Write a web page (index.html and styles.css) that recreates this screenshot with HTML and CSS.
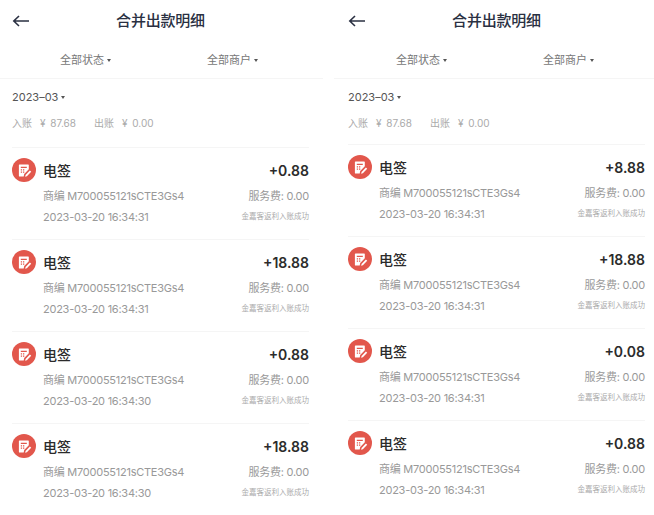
FILE: index.html
```html
<!DOCTYPE html>
<html>
<head>
    <title>合并出款明细</title>
    <link rel="stylesheet" href="styles.css">
</head>
<body>
    <svg class="defs" width="0" height="0">
        <symbol id="sign" viewBox="0 0 24 24">
            <circle cx="12" cy="12" r="12" fill="#e2574c"/>
            <path d="M7.500 6.500h8.700a.6.6 0 0 1 .6.6v4.200l-4.600 4.800-.5 2.400H7.500a.6.6 0 0 1-.6-.6V7.100a.6.6 0 0 1 .6-.6z" fill="#fff"/>
            <path d="M8.800 8.700h6v1.200h-6zM8.800 11.300h1.300v1.200H8.800zM11 11.300h1.300v1.200H11zM8.800 13.500h1.300v1.200H8.800zM11 13.500h1.300v1.200H11z" fill="#e2574c"/>
            <path d="M13.600 17l4.300-4.500 1.300 1.300-4.300 4.500-1.800.5z" fill="#fff"/>
        </symbol>
    </svg>

    <div class="screens">
        <section class="screen screen-left">
            <div class="topbar">
                <svg class="back" width="18" height="12" viewBox="0 0 18 12"><path d="M17 6H2M7 1L1.800 6 7 11" fill="none" stroke="#2a3042" stroke-width="1.600"/></svg>
                <h1>合并出款明细</h1>
            </div>
            <div class="filters">
                <div class="filter">全部状态<span class="caret"></span></div>
                <div class="filter">全部商户<span class="caret"></span></div>
            </div>
            <div class="summary">
                <div class="month">2023–03<span class="caret"></span></div>
                <div class="totals">
                    <div><span class="label">入账</span>¥ 87.68</div>
                    <div><span class="label">出账</span>¥ 0.00</div>
                </div>
            </div>
            <div class="list">
                <div class="item">
                    <svg class="icon"><use href="#sign"/></svg>
                    <div class="info">
                        <div class="name">电签</div>
                        <div class="line">商编 M700055121sCTE3Gs4</div>
                        <div class="line">2023-03-20 16:34:31</div>
                    </div>
                    <div class="nums">
                        <div class="amount">+0.88</div>
                        <div class="line">服务费: 0.00</div>
                        <div class="note">金嘉客返利入账成功</div>
                    </div>
                </div>
                <div class="item">
                    <svg class="icon"><use href="#sign"/></svg>
                    <div class="info">
                        <div class="name">电签</div>
                        <div class="line">商编 M700055121sCTE3Gs4</div>
                        <div class="line">2023-03-20 16:34:31</div>
                    </div>
                    <div class="nums">
                        <div class="amount">+18.88</div>
                        <div class="line">服务费: 0.00</div>
                        <div class="note">金嘉客返利入账成功</div>
                    </div>
                </div>
                <div class="item">
                    <svg class="icon"><use href="#sign"/></svg>
                    <div class="info">
                        <div class="name">电签</div>
                        <div class="line">商编 M700055121sCTE3Gs4</div>
                        <div class="line">2023-03-20 16:34:30</div>
                    </div>
                    <div class="nums">
                        <div class="amount">+0.88</div>
                        <div class="line">服务费: 0.00</div>
                        <div class="note">金嘉客返利入账成功</div>
                    </div>
                </div>
                <div class="item">
                    <svg class="icon"><use href="#sign"/></svg>
                    <div class="info">
                        <div class="name">电签</div>
                        <div class="line">商编 M700055121sCTE3Gs4</div>
                        <div class="line">2023-03-20 16:34:30</div>
                    </div>
                    <div class="nums">
                        <div class="amount">+18.88</div>
                        <div class="line">服务费: 0.00</div>
                        <div class="note">金嘉客返利入账成功</div>
                    </div>
                </div>
            </div>
        </section>

        <section class="screen screen-right">
            <div class="topbar">
                <svg class="back" width="18" height="12" viewBox="0 0 18 12"><path d="M17 6H2M7 1L1.800 6 7 11" fill="none" stroke="#2a3042" stroke-width="1.600"/></svg>
                <h1>合并出款明细</h1>
            </div>
            <div class="filters">
                <div class="filter">全部状态<span class="caret"></span></div>
                <div class="filter">全部商户<span class="caret"></span></div>
            </div>
            <div class="summary">
                <div class="month">2023–03<span class="caret"></span></div>
                <div class="totals">
                    <div><span class="label">入账</span>¥ 87.68</div>
                    <div><span class="label">出账</span>¥ 0.00</div>
                </div>
            </div>
            <div class="list">
                <div class="item">
                    <svg class="icon"><use href="#sign"/></svg>
                    <div class="info">
                        <div class="name">电签</div>
                        <div class="line">商编 M700055121sCTE3Gs4</div>
                        <div class="line">2023-03-20 16:34:31</div>
                    </div>
                    <div class="nums">
                        <div class="amount">+8.88</div>
                        <div class="line">服务费: 0.00</div>
                        <div class="note">金嘉客返利入账成功</div>
                    </div>
                </div>
                <div class="item">
                    <svg class="icon"><use href="#sign"/></svg>
                    <div class="info">
                        <div class="name">电签</div>
                        <div class="line">商编 M700055121sCTE3Gs4</div>
                        <div class="line">2023-03-20 16:34:31</div>
                    </div>
                    <div class="nums">
                        <div class="amount">+18.88</div>
                        <div class="line">服务费: 0.00</div>
                        <div class="note">金嘉客返利入账成功</div>
                    </div>
                </div>
                <div class="item">
                    <svg class="icon"><use href="#sign"/></svg>
                    <div class="info">
                        <div class="name">电签</div>
                        <div class="line">商编 M700055121sCTE3Gs4</div>
                        <div class="line">2023-03-20 16:34:31</div>
                    </div>
                    <div class="nums">
                        <div class="amount">+0.08</div>
                        <div class="line">服务费: 0.00</div>
                        <div class="note">金嘉客返利入账成功</div>
                    </div>
                </div>
                <div class="item">
                    <svg class="icon"><use href="#sign"/></svg>
                    <div class="info">
                        <div class="name">电签</div>
                        <div class="line">商编 M700055121sCTE3Gs4</div>
                        <div class="line">2023-03-20 16:34:31</div>
                    </div>
                    <div class="nums">
                        <div class="amount">+0.88</div>
                        <div class="line">服务费: 0.00</div>
                        <div class="note">金嘉客返利入账成功</div>
                    </div>
                </div>
            </div>
        </section>
    </div>
</body>
</html>
```

FILE: styles.css
```css
html, body {
    height: 515px;
    overflow: hidden;
}
body {
    font-family: Inter, "Noto Sans CJK SC", sans-serif;
    background-color: #fff;
    margin: 0;
    color: #999;
}
.defs {
    display: block;
}
.screens {
    display: flex;
    gap: 11px;
}
.screen {
    width: 323px;
}
.screen-right {
    width: 320px;
}
.screen-left .topbar, .screen-left .summary, .screen-left .list {
    padding: 0 14px 0 12px;
}
.screen-right .topbar, .screen-right .summary, .screen-right .list {
    padding: 0 9px 0 14px;
}
.screen-left .filters {
    padding: 0 17px 0 12px;
}
.screen-right .filters {
    padding: 0 12px 0 14px;
}
.topbar {
    display: flex;
    align-items: center;
    height: 42px;
}
.back {
    flex: none;
    margin-right: -18px;
}
h1 {
    flex: 1;
    margin: 0;
    font-size: 15px;
    font-weight: 500;
    line-height: 42px;
    letter-spacing: -.2px;
    text-align: center;
    color: #2a3042;
}
.filters {
    display: flex;
    height: 36px;
    align-items: center;
    border-bottom: 1px solid #f5f5f5;
}
.filter {
    flex: 1;
    margin-top: -2px;
    text-align: center;
    font-size: 11px;
    color: #777;
}
.caret {
    display: inline-block;
    width: 0;
    height: 0;
    margin-left: 3px;
    border: 2.500px solid transparent;
    border-top: 3px solid #555;
    border-bottom: 0;
    vertical-align: 2px;
}
.summary {
    height: 68px;
}
.screen-right .summary {
    height: 65px;
}
.month {
    padding-top: 10px;
    font-size: 11px;
    line-height: 16px;
    color: #555;
}
.totals {
    display: flex;
    gap: 18px;
    margin-top: 10px;
    font-size: 10px;
    line-height: 16px;
    word-spacing: 2px;
    color: #aaa;
}
.label {
    margin-right: 8px;
}
.item {
    display: flex;
    height: 92px;
    box-sizing: border-box;
    padding-top: 10px;
    border-top: 1px solid #f5f5f5;
}
.icon {
    flex: none;
    width: 24px;
    height: 24px;
    margin-right: 7px;
}
.info {
    flex: 1;
}
.name {
    font-size: 14px;
    font-weight: 500;
    line-height: 26px;
    color: #2b2b2b;
}
.line {
    margin-top: 4px;
    font-size: 11px;
    line-height: 17px;
    letter-spacing: -.25px;
    color: #999;
}
.nums {
    text-align: right;
}
.amount {
    font-size: 14px;
    font-weight: 600;
    line-height: 26px;
    color: #2b2b2b;
}
.note {
    margin-top: 5px;
    font-size: 7.500px;
    line-height: 14px;
    color: #aaa;
}
```
